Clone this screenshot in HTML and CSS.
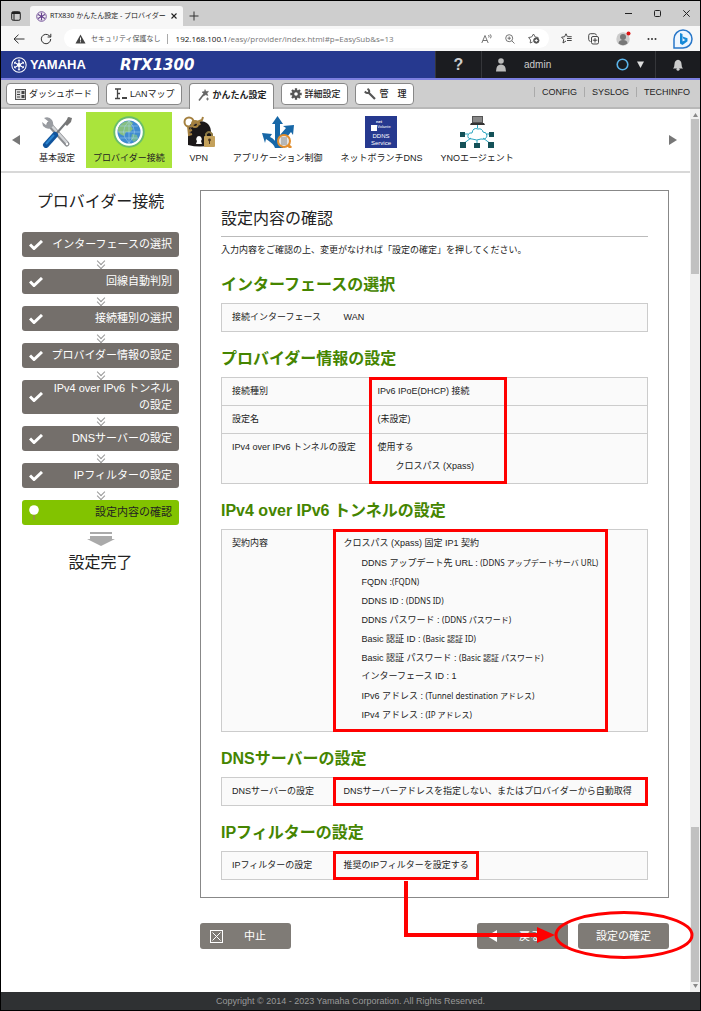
FILE: index.html
```html
<!DOCTYPE html>
<html lang="ja">
<head>
<meta charset="utf-8">
<title>RTX830 かんたん設定 - プロバイダー接続</title>
<link rel="stylesheet" href="styles.css">
</head>
<body>
<div class="window">
  <div class="tabstrip">
    <button class="plain workspaces" aria-label="ワークスペース"><svg width="10" height="10" viewBox="0 0 10 10" fill="none" stroke="#222"><rect x=".7" y=".7" width="8.6" height="8.6" rx="1.5"/><path d="M1 2h8" stroke-width="2"/><path d="M3 3v6"/></svg></button>
    <div class="browser-tab">
      <svg width="11" height="11" viewBox="0 0 20 20" fill="none" stroke="#65418e"><circle cx="10" cy="10" r="8.7" stroke-width="1.6"/><path d="M10 3v14M4 6.5l12 7M16 6.500l-12 7" stroke-width="2"/><path d="M8.500 4h3M3.500 8l2-3M14.500 5l2 3M8.500 16h3M3.500 12l2 3M16.500 12l-2 3"/></svg>
      <span class="browser-tab-title">RTX830 かんたん設定 - プロバイダー</span>
      <button class="plain" aria-label="タブを閉じる"><svg width="6" height="6" viewBox="0 0 6 6" stroke="#222" stroke-width="1.100"><path d="M.5.5l5 5M5.500.5l-5 5"/></svg></button>
    </div>
    <button class="plain new-tab" aria-label="新しいタブ"><svg width="10" height="10" viewBox="0 0 10 10" stroke="#333"><path d="M5 .5v9M.5 5h9"/></svg></button>
    <div class="window-buttons">
      <button class="plain" aria-label="最小化"><svg width="7" height="7" viewBox="0 0 7 7" stroke="#222"><path d="M0 3.500h7"/></svg></button>
      <button class="plain" aria-label="最大化"><svg width="7" height="7" viewBox="0 0 7 7" fill="none" stroke="#222"><rect x=".5" y=".5" width="6" height="6" rx="1"/></svg></button>
      <button class="plain" aria-label="閉じる"><svg width="7" height="7" viewBox="0 0 7 7" stroke="#222"><path d="M.3.3l6.400 6.400M6.700.3L.3 6.700"/></svg></button>
    </div>
  </div>

  <div class="toolbar">
    <button class="plain back" aria-label="戻る"><svg width="12" height="10" viewBox="0 0 12 10" fill="none" stroke="#333"><path d="M11.500 5H1M5.500.7L1 5l4.500 4.300"/></svg></button>
    <button class="plain reload" aria-label="更新"><svg width="12" height="12" viewBox="0 0 12 12" fill="none" stroke="#333"><path d="M10.700 6A4.700 4.700 0 1 1 9.200 2.600L10.700 4M10.800.8V4H7.600"/></svg></button>
    <div class="address">
      <svg width="11" height="10" viewBox="0 0 11 10"><path d="M5.500.5L10.500 9.500H.5z" fill="#444"/><path d="M5.500 3.500v3M5.500 7.300v1" stroke="#fff"/></svg>
      <span class="insecure">セキュリティ保護なし</span>
      <span class="address-rule"></span>
      <label class="host" for="url">192.168.100.1</label><input class="url" id="url" type="text" value="/easy/provider/index.html#p=EasySub&amp;s=13">
      <div class="address-icons">
        <svg width="11" height="10" viewBox="0 0 11 10" fill="none" stroke="#666" stroke-width=".9"><path d="M.8 9L4 1.500 7.200 9M1.900 6.500h4.200M7.500 1q1.200 1 .2 2.500M9.200.3q1.800 1.700.3 4"/></svg>
        <svg width="10" height="10" viewBox="0 0 10 10" fill="none" stroke="#666" stroke-width=".9"><circle cx="4.200" cy="4.200" r="3.500"/><path d="M6.800 6.800L9.500 9.500M2.500 4.200h3.400M4.200 2.500v3.400"/></svg>
        <svg width="12" height="11" viewBox="0 0 12 11" fill="none" stroke="#555" stroke-width=".9"><path d="M4.500 9L2.200 10l.4-3L.6 4.500l3-.5L5.500 1l1.700 3 3.200.5"/><circle cx="8.300" cy="7.500" r="2.700" fill="#555"/><path d="M8.300 6v3M6.800 7.500h3" stroke="#fff"/></svg>
      </div>
    </div>
    <div class="toolbar-icons">
      <svg width="11" height="11" viewBox="0 0 11 11" fill="none" stroke="#333" stroke-width=".9"><path d="M5 8L2 10l.7-3.500L.6 4.200l3-.5L5 .8l1.400 2.900M6 5.500h4.700M6.500 3.700h4.200M6 7.500h4.700"/></svg>
      <svg width="12" height="12" viewBox="0 0 12 12" fill="none" stroke="#333" stroke-width=".9"><path d="M2.500 8.500Q.7 8 .7 6.500V2.500Q.7.700 2.500.7h4q1.600 0 2 1.700"/><rect x="3.500" y="3.500" width="7" height="7.500" rx="1.500"/><path d="M7 5v4.500M4.800 7.200h4.500"/></svg>
      <svg width="15" height="15" viewBox="0 0 15 15"><circle cx="7" cy="8" r="6.700" fill="#ccc"/><circle cx="7" cy="6" r="3" fill="#777"/><path d="M2.500 12.500Q2.500 9 7 9t4.500 3.500Q7 16 2.500 12.500" fill="#777"/><circle cx="12.500" cy="2.500" r="2" fill="#d11"/></svg>
      <svg width="10" height="4" viewBox="0 0 10 4" fill="#333"><circle cx="1.500" cy="2" r="1"/><circle cx="5" cy="2" r="1"/><circle cx="8.500" cy="2" r="1"/></svg>
      <svg width="20" height="20" viewBox="0 0 20 20"><path d="M1 19V10a9 9 0 1 1 9 9z" fill="#eef6ff" stroke="#2877c9" stroke-width="1.500"/><path d="M7 4l2.500 1v7.500l3-1.500-2-1-1-2.500 5 1.800v3L9.500 16 7 14.500z" fill="#1689d8"/></svg>
    </div>
  </div>

  <header class="brand-bar">
    <div class="brand">
      <svg width="16" height="16" viewBox="0 0 20 20" fill="none" stroke="#fff"><circle cx="10" cy="10" r="9" stroke-width="1.300"/><path d="M10 3v14M4 6.500l12 7M16 6.500l-12 7" stroke-width="1.500"/><path d="M8.500 4.500h3M4 9l2-3.500M14 5.500L16 9M8.500 15.500h3M4 11l2 3.500M16 11l-2 3.500"/><circle cx="10" cy="10" r="2" fill="#fff"/></svg>
      <span class="maker">YAMAHA</span>
      <span class="model">RTX1300</span>
    </div>
    <button class="plain bar-cell help" aria-label="ヘルプ">?</button>
    <button class="plain bar-cell user">
      <svg width="10" height="14" viewBox="0 0 10 14" fill="#bbb"><circle cx="5" cy="3" r="2.800"/><path d="M0 13.500Q0 6.500 5 6.500t5 7z"/></svg>
      <span class="user-name">admin</span>
      <span class="user-state"><svg width="13" height="13" viewBox="0 0 13 13" fill="none" stroke="#5ab4ea" stroke-width="1.600"><circle cx="6.500" cy="6.500" r="5.300"/></svg>
      <svg width="7" height="7" viewBox="0 0 7 7" fill="#ddd"><path d="M0 .5h7L3.500 7z"/></svg></span>
    </button>
    <button class="plain bar-cell bell" aria-label="通知"><svg width="12" height="12" viewBox="0 0 12 12" fill="#ccc"><path d="M1 9.500Q2.500 8 2.500 5 2.500 1.500 6 .8 9.500 1.500 9.500 5q0 3 1.500 4.500z"/><circle cx="6" cy="10.300" r="1.500"/></svg></button>
  </header>

  <nav class="modes">
    <button class="mode"><svg width="11" height="11" viewBox="0 0 11 11"><rect x=".5" y=".5" width="10" height="10" fill="#ddd" stroke="#555"/><path d="M2 2.500h3v1H2zM2 5h3v1H2zM2 7.500h3v1H2zM6.500 2h3v3h-3zM6.500 6h3v3h-3z" fill="#444"/></svg>ダッシュボード</button>
    <button class="mode"><svg width="12" height="12" viewBox="0 0 12 12" fill="none" stroke="#444"><path d="M0 1h6M2.500 1v9.500M2.500 5.500H5M0 10.500h5" stroke-width="1.300"/><path d="M7 10h5" stroke-width="2"/></svg>LANマップ</button>
    <button class="mode mode-current"><svg width="12" height="12" viewBox="0 0 12 12" stroke="#666" fill="#666"><path d="M1 11.500L6 5" stroke-width="1.600"/><path d="M7 .5l1 2 2.500-.2L9 4.500l1 2-2.500-.7L5.500 7V4.500L4 3l2.300-.5z" stroke-width=".5"/><path d="M9.500 8.500v3M8 10h3" stroke-width=".8"/></svg>かんたん設定</button>
    <button class="mode mode-heavy"><svg width="12" height="12" viewBox="0 0 12 12"><g stroke="#555" stroke-width="2.300"><path d="M6 .3v11.400M.3 6h11.400M2 2l8 8M10 2l-8 8"/></g><circle cx="6" cy="6" r="4" fill="#555"/><circle cx="6" cy="6" r="1.800" fill="#fff"/></svg>詳細設定</button>
    <button class="mode mode-heavy mode-spread"><svg width="12" height="12" viewBox="0 0 12 12" fill="none" stroke="#555"><path d="M4 4l7 7" stroke-width="2.200"/><path d="M3.500.8Q6 2.500 5 4.500 3 6 .8 3.500" stroke-width="1.900"/></svg><span>管</span><span>理</span></button>
    <div class="reports"><a href="#config">CONFIG</a><a href="#syslog">SYSLOG</a><a href="#techinfo">TECHINFO</a></div>
  </nav>

  <div class="viewport">
    <div class="document">
      <nav class="features">
        <button class="plain scroll-left" aria-label="前へ"><svg width="8" height="10" viewBox="0 0 8 10" fill="#777"><path d="M8 0v10L0 5z"/></svg></button>
        <a class="feature" href="#basic">
          <svg width="32" height="32" viewBox="0 0 32 32"><path d="M8 8l18 20" stroke="#8b8d91" stroke-width="5" stroke-linecap="round"/><path d="M9 8l17 19" stroke="#d2d4d7" stroke-width="2.500"/><path d="M3 2q5-2 8 2 3 5-1 8-4 2-8-2l-1-4 4 3 3-3z" fill="#999ca1"/><circle cx="26" cy="28" r="1.200" fill="#fff"/><path d="M29 2L15 18" stroke="#74777a" stroke-width="2"/><path d="M27 1l4 1-1 4-4 4-2-2z" fill="#777"/><path d="M14 19L5 29" stroke="#11549c" stroke-width="6" stroke-linecap="round"/><path d="M13 19L5 28" stroke="#2b84d0" stroke-width="2"/></svg>
          基本設定</a>
        <a class="feature feature-current" href="#provider">
          <svg width="32" height="32" viewBox="0 0 32 32"><circle cx="16" cy="16" r="15.700" fill="#69bd6c"/><circle cx="16" cy="16" r="13.800" fill="#fff"/><circle cx="16" cy="16" r="11.500" fill="#408bd0"/><path d="M5 12Q10 4 17 5l3 2-2 3 2 3-3 3-4 0-2 4-4-2-2-3z" fill="#86bf80"/><path d="M19 18l5 1 1 4-4 3-3-3z" fill="#6db49b"/><path d="M5 16h22M7 10h18M7 22h18M16 5v22M16 5Q5 16 16 27M16 5q11 11 0 22" stroke="#a9d5f2" stroke-width=".5" fill="none"/></svg>
          プロバイダー接続</a>
        <a class="feature" href="#vpn">
          <svg width="32" height="32" viewBox="0 0 32 32"><path d="M5 29V17Q5 5 16 5q12 0 12 12v12q-11 3-23 0" fill="#1b1718"/><path d="M7 18Q6 7 17 7" stroke="#75605c" fill="none"/><path d="M16 20a3 3 0 0 1 2 5l1 3h-6l1-3a3 3 0 0 1 2-5" fill="#fff"/><g fill="none" stroke="#a58140" stroke-width="2"><circle cx="6" cy="6" r="4.500"/><path d="M9 8l10-4 1-3M15 5l2 4M5 10l1 9 3-1M6 15l3-1"/><circle cx="12" cy="8" r="3"/><path d="M23 20v-2q3-4 6 0v3" stroke="#8d7944"/></g><rect x="21" y="20" width="11" height="11" rx="1" fill="#c4a15b"/><circle cx="26.500" cy="24" r="1.400" fill="#4c3720"/><path d="M26.500 24v4" stroke="#4c3720"/></svg>
          VPN</a>
        <a class="feature" href="#application">
          <svg width="32" height="32" viewBox="0 0 32 32"><path d="M13 32V8h-3l5.500-8L21 8h-3v11l6-7-3-2 11-1-1 10-2-3-8 10v6z" fill="#1767a7"/><path d="M13 32Q12 28 4 23l-1 4-3-10 10 1-2 3q5 2 8 9v2z" fill="#1767a7"/><circle cx="22" cy="25" r="6" fill="#e5e5e5" stroke="#e28d2c" stroke-width="2"/><path d="M26 29l3 3" stroke="#e28d2c" stroke-width="3"/><path d="M20 21v8M22 21v8M24 21v8" stroke="#888"/></svg>
          アプリケーション制御</a>
        <a class="feature" href="#ddns">
          <svg width="32" height="32" viewBox="0 0 32 32"><rect width="32" height="32" fill="#26398f"/><path d="M6 9h6v6H6z" fill="#fff"/><g fill="#fff" font-family="Liberation Sans" text-anchor="middle"><text x="14" y="7" font-size="4" font-weight="bold">net</text><text x="19" y="12" font-size="4">Volante</text><text x="16" y="22" font-size="6">DDNS</text><text x="16" y="29" font-size="6">Service</text></g></svg>
          ネットボランチDNS</a>
        <a class="feature" href="#yno">
          <svg width="34" height="32" viewBox="0 0 34 32"><path d="M12 0h11v7H12z" fill="#555"/><path d="M13 1h9v5h-9z" fill="#888"/><path d="M11 7h13l1 2H10z" fill="#333"/><g fill="none" stroke="#2aa5c0"><path d="M12 23q-5 0-4-4 1-3 4-2 1-6 6-4 4-1 5 3 4 0 4 4-1 4-6 3-4 2-9 0M17.500 9v3M5 18h3M27 18h3M11 22l-8 6M17 24v4M23 22l8 6"/></g><path d="M0 16h5v5H0zM29 16h5v5h-5zM0 26h6v6H0zM14 27h6v5h-6zM28 26h6v6h-6z" fill="#145158"/></svg>
          YNOエージェント</a>
        <button class="plain scroll-right" aria-label="次へ"><svg width="8" height="10" viewBox="0 0 8 10" fill="#777"><path d="M0 0v10l8-5z"/></svg></button>
      </nav>

      <div class="wizard">
        <aside class="steps">
          <h1 class="steps-title">プロバイダー接続</h1>
          <ol class="step-list">
            <li class="step"><svg class="tick" viewBox="0 0 14 10"><path d="M1 4.500l4 4L13 1"/></svg><span>インターフェースの選択</span></li>
            <li class="step"><svg class="tick" viewBox="0 0 14 10"><path d="M1 4.500l4 4L13 1"/></svg><span>回線自動判別</span></li>
            <li class="step"><svg class="tick" viewBox="0 0 14 10"><path d="M1 4.500l4 4L13 1"/></svg><span>接続種別の選択</span></li>
            <li class="step"><svg class="tick" viewBox="0 0 14 10"><path d="M1 4.500l4 4L13 1"/></svg><span>プロバイダー情報の設定</span></li>
            <li class="step"><svg class="tick" viewBox="0 0 14 10"><path d="M1 4.500l4 4L13 1"/></svg><span>IPv4 over IPv6 トンネルの設定</span></li>
            <li class="step"><svg class="tick" viewBox="0 0 14 10"><path d="M1 4.500l4 4L13 1"/></svg><span>DNSサーバーの設定</span></li>
            <li class="step"><svg class="tick" viewBox="0 0 14 10"><path d="M1 4.500l4 4L13 1"/></svg><span>IPフィルターの設定</span></li>
            <li class="step step-current"><svg width="10" height="15" viewBox="0 0 10 15"><path d="M5 8v7" stroke="#9a8a50" stroke-width="1.500"/><circle cx="5" cy="5" r="4.800" fill="#fff"/></svg><span>設定内容の確認</span></li>
          </ol>
          <svg class="down" width="28" height="14" viewBox="0 0 28 14" fill="#aaa"><path d="M3 0h22v2H3zM3 4h22v3h3l-14 7L0 7h3z"/></svg>
          <p class="steps-end">設定完了</p>
        </aside>

        <main class="main">
          <div class="panel">
            <h2 class="panel-title">設定内容の確認</h2>
            <p class="lead">入力内容をご確認の上、変更がなければ「設定の確定」を押してください。</p>

            <h3 class="section-title">インターフェースの選択</h3>
            <div class="sheet"><table><tr><th scope="row">接続インターフェース</th><td>WAN</td></tr></table></div>

            <h3 class="section-title">プロバイダー情報の設定</h3>
            <div class="sheet sheet-wide">
              <table>
                <tr><th scope="row">接続種別</th><td>IPv6 IPoE(DHCP) 接続</td></tr>
                <tr><th scope="row">設定名</th><td>(未設定)</td></tr>
                <tr class="tall"><th scope="row">IPv4 over IPv6 トンネルの設定</th><td>使用する<div class="detail">クロスパス (Xpass)</div></td></tr>
              </table>
              <span class="mark mark-provider"></span>
            </div>

            <h3 class="section-title">IPv4 over IPv6 トンネルの設定</h3>
            <div class="sheet">
              <table>
                <tr class="tall"><th scope="row">契約内容</th><td>クロスパス (Xpass) 固定 IP1 契約
                  <ul class="detail">
                    <li>DDNS アップデート先 URL : <span class="sample">(DDNS アップデートサーバ URL)</span></li>
                    <li>FQDN :<span class="sample">(FQDN)</span></li>
                    <li>DDNS ID : <span class="sample">(DDNS ID)</span></li>
                    <li>DDNS パスワード : <span class="sample">(DDNS パスワード)</span></li>
                    <li>Basic 認証 ID : <span class="sample">(Basic 認証 ID)</span></li>
                    <li>Basic 認証 パスワード : <span class="sample">(Basic 認証 パスワード)</span></li>
                    <li>インターフェース ID : 1</li>
                    <li>IPv6 アドレス : <span class="sample">(Tunnel destination アドレス)</span></li>
                    <li>IPv4 アドレス : <span class="sample">(IP アドレス)</span></li>
                  </ul></td></tr>
              </table>
              <span class="mark mark-contract"></span>
            </div>

            <h3 class="section-title">DNSサーバーの設定</h3>
            <div class="sheet">
              <table><tr><th scope="row">DNSサーバーの設定</th><td>DNSサーバーアドレスを指定しない、またはプロバイダーから自動取得</td></tr></table>
              <span class="mark mark-dns"></span>
            </div>

            <h3 class="section-title">IPフィルターの設定</h3>
            <div class="sheet">
              <table><tr><th scope="row">IPフィルターの設定</th><td>推奨のIPフィルターを設定する</td></tr></table>
              <span class="mark mark-filter"></span>
            </div>
          </div>

          <div class="actions">
            <button class="action action-cancel"><svg width="13" height="13" viewBox="0 0 13 13" fill="none" stroke="#fff"><rect x=".5" y=".5" width="12" height="12"/><path d="M2.500 2.500l8 8M10.500 2.500l-8 8"/></svg><span>中止</span></button>
            <button class="action action-back"><svg width="10" height="12" viewBox="0 0 10 12" fill="#fff"><path d="M10 0v12L0 6z"/></svg><span>戻る</span></button>
            <div class="confirm">
              <button class="action">設定の確定</button>
              <svg class="ring" width="140" height="50" viewBox="0 0 140 50" fill="none" stroke="#f00" stroke-width="3"><ellipse cx="70" cy="25" rx="68" ry="22.500"/></svg>
              <svg class="connector" width="152" height="64" viewBox="0 0 152 64"><path d="M3 0v54h133" fill="none" stroke="#f00" stroke-width="4"/><path d="M134 46l18 8-18 8z" fill="#f00"/></svg>
            </div>
          </div>
        </main>
      </div>
    </div>
    <div class="scrollbar">
      <svg width="5" height="4" viewBox="0 0 5 4" fill="#888"><path d="M0 4h5L2.500 0z"/></svg>
      <span class="thumb"></span>
      <span class="track-gap"></span>
      <span class="thumb"></span>
      <svg width="5" height="4" viewBox="0 0 5 4" fill="#888"><path d="M0 0h5L2.500 4z"/></svg>
    </div>
  </div>
  <footer class="footer">Copyright © 2014 - 2023 Yamaha Corporation. All Rights Reserved.</footer>
</div>
</body>
</html>
```
FILE: styles.css
```css
* { box-sizing: border-box; }
body {
  margin: 0;
  color: #222;
  font: 9px/14px "Liberation Sans", "Noto Sans CJK JP", sans-serif;
}
h1, h2, h3, p, ol, ul { margin: 0; padding: 0; }
ol, ul { list-style: none; }
a { color: inherit; text-decoration: none; }
button, input { font: inherit; color: inherit; }
svg { display: block; flex: none; }
.plain { display: flex; align-items: center; padding: 0; border: 0; background: none; }

.window {
  display: flex;
  flex-direction: column;
  min-height: 100vh;
  border: 1px solid #000;
  background: #fff;
}

/* browser frame */
.tabstrip { display: flex; align-items: center; height: 25px; background: #cecece; }
.workspaces { margin: 4px 0 0 10px; }
.browser-tab {
  display: flex;
  align-items: center;
  align-self: flex-end;
  gap: 3px;
  min-width: 153px;
  height: 20px;
  margin-left: 9px;
  padding: 0 6px;
  border-radius: 3px 3px 0 0;
  background: #f7f7f7;
}
.browser-tab-title {
  flex: 1;
  white-space: nowrap;
  font: 7px/12px "Noto Sans", "Noto Sans CJK JP", sans-serif;
}
.new-tab { margin: 4px 0 0 6px; }
.window-buttons { display: flex; gap: 22px; margin-left: auto; padding-right: 10px; }
.toolbar { display: flex; align-items: center; height: 25px; background: #f7f7f7; }
.back { margin-left: 12px; }
.reload { margin-left: 15px; }
.address {
  display: flex;
  align-items: center;
  flex: 1;
  height: 19px;
  margin-left: 12px;
  padding: 0 9px 0 11px;
  border-radius: 10px;
  background: #fff;
  font: 8px/14px "Open Sans", "Noto Sans", "Noto Sans CJK JP", sans-serif;
}
.insecure { margin-left: 5px; font-size: 7px; color: #555; white-space: nowrap; }
.address-rule { width: 1px; height: 10px; margin: 0 8px 0 6px; background: #aaa; }
.host { color: #111; }
.url { flex: 1; min-width: 0; padding: 0; border: 0; outline: 0; background: none; color: #777; }
.address-icons { display: flex; align-items: center; gap: 13px; }
.toolbar-icons { display: flex; align-items: center; gap: 16px; margin: 0 7px 0 12px; }

/* brand bar */
.brand-bar { display: flex; height: 29px; background: #1b1c20; border-bottom: 2px solid #7c7fe0; }
.brand { display: flex; align-items: center; flex: 1; padding-left: 10px; background: #26398f; color: #fff; }
.maker { margin-left: 3px; width: 57px; font: bold 13px/20px "Liberation Sans", sans-serif; }
.model { margin-left: 33px; font: italic bold 15px/20px "DejaVu Sans", sans-serif; }
.bar-cell { border-left: 1px solid #35363a; color: #ccc; }
.help { justify-content: center; width: 46px; font-size: 16px; font-weight: bold; }
.user { width: 174px; padding: 0 11px 0 14px; font-size: 10px; }
.user-name { margin-left: 18px; }
.user-state { display: flex; align-items: center; gap: 8px; margin-left: auto; }
.bell { justify-content: center; width: 45px; }

/* mode tabs */
.modes {
  display: flex;
  align-items: flex-start;
  gap: 7px;
  height: 29px;
  padding: 3px 10px 0 5px;
  background: #cecece;
  border-bottom: 2px solid #b8b8b8;
}
.mode {
  display: flex;
  align-items: center;
  gap: 3px;
  height: 22px;
  padding: 0 6px 0 8px;
  border: 1px solid #888;
  border-radius: 4px;
  background: #fff;
  white-space: nowrap;
}
.mode-current { height: 26px; padding-bottom: 4px; border-bottom: 0; border-radius: 4px 4px 0 0; font-weight: bold; }
.mode-heavy { font-weight: 500; }
.mode-spread { gap: 4px; }
.mode-spread span + span { margin-left: 5px; }
.reports { display: flex; margin: 4px 0 0 auto; line-height: 10px; }
.reports a { padding-left: 7px; border-left: 1px solid #aaa; }
.reports a + a { margin-left: 7px; }

.viewport { display: flex; flex: 1; }
.document { flex: 1; min-width: 0; }

/* feature menu */
.features { display: flex; align-items: center; gap: 4px; height: 64px; border-bottom: 2px solid #d8d8d8; }
.scroll-left { margin: 0 8px 0 11px; }
.scroll-right { margin: 0 13px 0 auto; }
.feature {
  display: flex;
  flex-direction: column;
  align-items: center;
  gap: 3px;
  height: 56px;
  padding: 4px 7px 0;
  white-space: nowrap;
}
.feature-current { background: #aae43c; }

/* wizard */
.wizard { display: grid; grid-template-columns: 157px minmax(0, 1fr); gap: 21px; padding: 17px 21px 42px; }
.steps { display: flex; flex-direction: column; align-items: center; }
.steps-title, .steps-end { font-size: 16px; line-height: 24px; font-weight: 400; }
.step-list { align-self: stretch; display: grid; gap: 12px; margin-top: 18px; }
.step {
  position: relative;
  display: flex;
  align-items: center;
  justify-content: space-between;
  gap: 3px;
  min-height: 25px;
  padding: 0 7px;
  border-radius: 3px;
  background: #746f6b;
  color: #fff;
  font-size: 11px;
  line-height: 17px;
  text-align: right;
}
.step + .step::before, .step + .step::after {
  content: "";
  position: absolute;
  left: 76px;
  top: -11px;
  width: 5px;
  height: 5px;
  border: solid #999;
  border-width: 0 1px 1px 0;
  transform: rotate(45deg);
}
.step + .step::after { top: -7px; }
.step-current { background: #82c300; color: #222; }
.tick { width: 14px; height: 10px; fill: none; stroke: #fff; stroke-width: 3; }
.down { margin-top: 7px; }
.steps-end { margin-top: 5px; }

.panel { padding: 16px 20px 17px; border: 1px solid #888; }
.panel-title { padding-bottom: 5px; border-bottom: 1px solid #bbb; font-size: 16px; line-height: 24px; font-weight: 400; }
.lead { margin: 6px 0 0; }
.section-title { margin: 18px 0 8px; color: #458500; font-size: 16px; line-height: 20px; font-weight: bold; }
.sheet + .section-title { margin-top: 17px; }
.sheet { position: relative; }
.sheet table { width: 100%; border-collapse: collapse; background: #fafafa; border: 1px solid #ccc; }
.sheet tr { border-top: 1px solid #ccc; }
.sheet th, .sheet td { padding: 4px 0 4px 10px; line-height: 19px; vertical-align: top; text-align: left; font-weight: 400; }
.sheet th { width: 112px; white-space: nowrap; }
.sheet-wide th { width: 146px; }
.sheet .tall th, .sheet .tall td { padding-bottom: 7px; }
.detail { padding-left: 18px; }
.detail li { height: 19px; white-space: nowrap; }
.sample { font-family: "Noto Sans", "Noto Sans CJK JP", sans-serif; font-size: 8px; }

/* highlights laid over the sheets */
.mark { position: absolute; top: 0; bottom: 0; border: 3px solid #f00; }
.mark-provider { left: 148px; width: 138px; }
.mark-contract { left: 112px; width: 275px; }
.mark-dns { left: 112px; right: 0; }
.mark-filter { left: 112px; width: 146px; }

.actions { display: flex; margin-top: 25px; }
.action {
  display: flex;
  align-items: center;
  justify-content: center;
  width: 91px;
  height: 26px;
  padding: 0 10px;
  border: 0;
  border-radius: 3px;
  background: #7f7b76;
  color: #fff;
  font-size: 11px;
}
.action-cancel, .action-back { justify-content: flex-start; }
.action-cancel span { margin-left: 21px; }
.action-back { margin: 0 10px 0 auto; }
.action-back span { margin-left: 22px; }
.confirm { position: relative; }
.ring { position: absolute; left: -24px; top: -13px; }
.connector { position: absolute; left: -175px; top: -42px; }

.scrollbar {
  display: flex;
  flex-direction: column;
  align-items: center;
  justify-content: space-between;
  width: 10px;
  padding: 4px 0;
  background: #f0f0f0;
}
.thumb { width: 8px; height: 155px; background: #c1c1c1; }
.track-gap { height: 550px; }

.footer { height: 18px; background: #2f3133; color: #999; line-height: 18px; text-align: center; }
```
